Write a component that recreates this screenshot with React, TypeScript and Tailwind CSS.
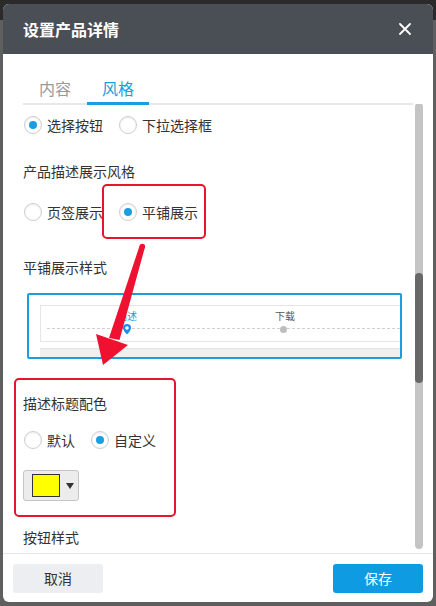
import React from "react";

const Radio = ({ checked, label }: { checked?: boolean; label: string }) => (
  <div className="flex items-center ml-[1px] mr-[15px] h-[18px]">
    <span className="w-[18px] h-[18px] rounded-full border border-[#cdcdcd] bg-white flex items-center justify-center shadow-[inset_0_1px_2px_rgba(0,0,0,0.08)]">
      {checked && <span className="w-[8px] h-[8px] rounded-full bg-[#1a9ee0]" />}
    </span>
    <span className="ml-[5px] text-[14px] leading-[18px] text-[#333]">{label}</span>
  </div>
);

const Label = ({ text, className }: { text: string; className: string }) => (
  <div className={`h-[20px] leading-[20px] text-[14px] text-[#333] ${className}`}>{text}</div>
);

export default function App() {
  return (
    <div className="relative w-[436px] h-[606px] overflow-hidden bg-[linear-gradient(to_bottom,#2b2b2b_0,#2b2b2b_20px,#5f5f5f_20px)] pt-[4px] pl-[3px] font-['Noto_Sans_CJK_SC','Noto_Sans',sans-serif]">
      <div className="w-[430px] h-[598px] rounded-[6px] overflow-hidden bg-white flex flex-col">
        {/* header */}
        <div className="h-[50px] shrink-0 bg-[#4a4f56] flex items-center justify-between pl-[20px] pr-[22px]">
          <span className="text-white text-[16px] font-bold leading-[20px]">设置产品详情</span>
          <svg width="12" height="12" viewBox="0 0 12 12">
            <path d="M1 1L11 11M11 1L1 11" stroke="white" strokeWidth="1.8" strokeLinecap="round" />
          </svg>
        </div>
        {/* tabs */}
        <div className="h-[50px] shrink-0 px-[20px] pt-[22px]">
          <div className="flex w-[390px] border-b-2 border-[#e8e8e8]">
            <div className="w-[64px] text-center text-[16px] leading-[24px] pb-[2px] -mb-[2px] border-b-2 border-transparent text-[#999]">内容</div>
            <div className="w-[62px] text-center text-[16px] leading-[24px] pb-[2px] -mb-[2px] border-b-[3px] border-[#1a9ee0] text-[#1a9ee0]">风格</div>
          </div>
        </div>
        {/* scroll area */}
        <div className="h-[449px] shrink-0 flex overflow-hidden">
          <div className="flex-1 pl-[20px] pt-[12px] flex flex-col">
            <div className="flex">
              <Radio checked label="选择按钮" />
              <Radio label="下拉选择框" />
            </div>
            <Label text="产品描述展示风格" className="mt-[27px]" />
            <div className="flex mt-[22px]">
              <Radio label="页签展示" />
              <Radio checked label="平铺展示" />
            </div>
            <Label text="平铺展示样式" className="mt-[36px]" />
            <div className="mt-[16px] ml-[4px] w-[375px] h-[66px] shrink-0 border-2 border-[#1a9ee0] rounded-[2px] overflow-hidden pl-[11px] pt-[10px]">
              <div className="h-[37px] border border-r-0 border-[#e6e6e6] flex flex-col">
                <div className="flex">
                  <div className="w-[66px]" />
                  <div className="w-[40px] text-center text-[10px] leading-[12px] mt-[4px] text-[#1a9ee0]">描述</div>
                  <div className="w-[118px]" />
                  <div className="w-[40px] text-center text-[10px] leading-[12px] mt-[4px] text-[#555]">下载</div>
                </div>
                <div className="relative h-[14px] flex items-center ml-[6px]">
                  <div className="absolute left-0 right-0 top-[6px] border-t border-dashed border-[#cfcfcf]" />
                  <div className="w-[75px]" />
                  <svg width="10" height="12" viewBox="0 0 10 12" className="relative">
                    <path d="M5 11.5C5 11.5 1 7.6 1 5a4 4 0 0 1 8 0c0 2.6-4 6.5-4 6.5z" fill="#1a8fe8" />
                    <circle cx="5" cy="5" r="1.8" fill="white" />
                  </svg>
                  <div className="w-[148px]" />
                  <span className="relative w-[7px] h-[7px] rounded-full bg-[#bdbdbd]" />
                </div>
              </div>
              <div className="mt-[6px] h-[12px] bg-[#efefef] border-t border-[#e3e3e3]" />
            </div>
            <Label text="描述标题配色" className="mt-[34px]" />
            <div className="flex mt-[18px]">
              <Radio label="默认" />
              <Radio checked label="自定义" />
            </div>
            <div className="mt-[21px] w-[56px] h-[31px] shrink-0 bg-[#ececec] border border-[#c5c5c5] rounded-[3px] flex items-center pl-[8px]">
              <div className="w-[28px] h-[23px] border border-[#333] bg-[#ffff00]" />
              <div className="ml-[6px] w-0 h-0 border-l-[4px] border-r-[4px] border-t-[6px] border-l-transparent border-r-transparent border-t-[#333]" />
            </div>
            <Label text="按钮样式" className="mt-[26px]" />
          </div>
          <div className="w-[8px] mr-[10px] mb-[4px] -mt-[1px] rounded-full bg-[#c4c4c4] flex flex-col">
            <div className="mt-[170px] h-[110px] rounded-full bg-[#686868]" />
          </div>
        </div>
        {/* footer */}
        <div className="flex-1 border-t border-[#e6e6e6] flex items-start justify-between px-[10px] pt-[10px]">
          <button className="w-[90px] h-[29px] rounded-[3px] bg-[#eceef2] text-[14px] text-[#333]">取消</button>
          <button className="w-[90px] h-[29px] rounded-[3px] bg-[#0e9be2] text-[14px] text-white">保存</button>
        </div>
      </div>

      {/* annotations */}
      <div className="absolute left-[102px] top-[184px] w-[104px] h-[55px] border-[2.5px] border-[#e8132c] rounded-[5px]" />
      <div className="absolute left-[14px] top-[378px] w-[162px] h-[139px] border-[2.5px] border-[#e8132c] rounded-[5px]" />
      <svg className="absolute left-0 top-0 pointer-events-none" width="436" height="606" viewBox="0 0 436 606">
        <polygon points="139.5,246 145,247 119.5,340 109,338" fill="#ee1230" />
        <circle cx="142.3" cy="246.5" r="2.8" fill="#ee1230" />
        <polygon points="96,334 128,345 103,365" fill="#ee1230" />
      </svg>
    </div>
  );
}
